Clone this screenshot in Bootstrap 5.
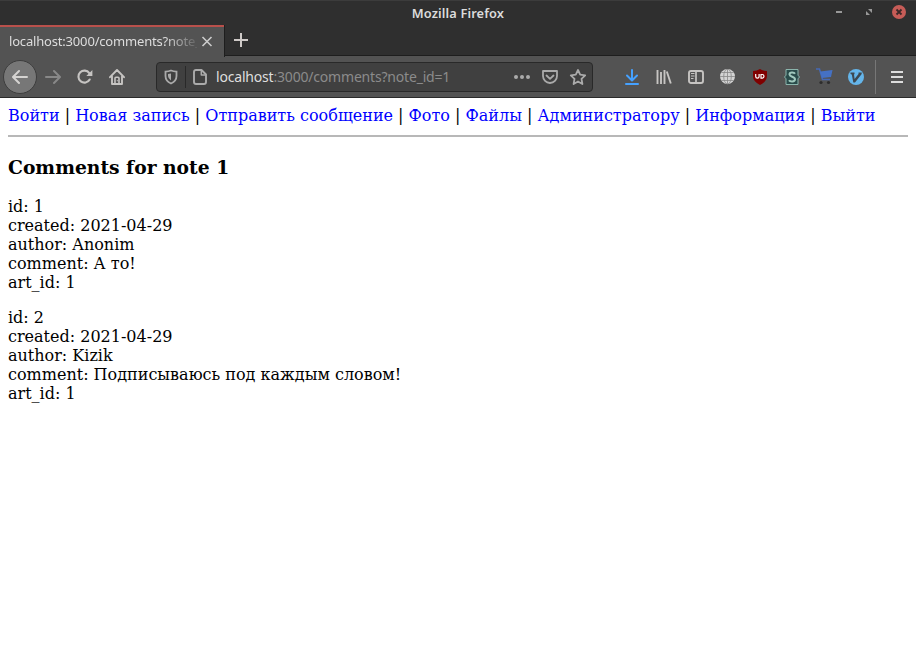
<!DOCTYPE html>
<html lang="ru">
<head>
<meta charset="utf-8">
<title>Mozilla Firefox</title>
<link rel="stylesheet" href="https://cdn.jsdelivr.net/npm/bootstrap@5.3.0/dist/css/bootstrap.min.css">
<style>
body{height:662px;overflow:hidden;background:#fff;color:#000}
.chrome{font-family:"Noto Sans","Open Sans",sans-serif;background:#2f2f2f;color:#ddd}
.chrome svg{display:block;flex:none}
.titlebar{height:25px;border-top:1px solid #3c3c3c;display:grid;grid-template-columns:1fr auto 1fr}
.wintitle{font-size:12.8px;font-weight:600;line-height:23px;padding-top:1px;letter-spacing:.13px;color:#dcdcdc}
.tabs{height:31px}
.tab{width:224px;height:32px;background:#535353;border-top:2px solid #b9504b;padding-left:9px;padding-right:9px;position:relative}
.tab-edge{width:1px;height:32px;background:#1e1e1e}
.tablabel{width:188px;overflow:hidden;white-space:nowrap;font-size:13px;letter-spacing:-.18px;line-height:28px;padding-bottom:2px;color:#ddd;-webkit-mask-image:linear-gradient(90deg,#000 156px,transparent 192px);mask-image:linear-gradient(90deg,#000 156px,transparent 192px)}
.tabrest{height:31px;border-bottom:1px solid #1e1e1e}
.toolbar{height:42px;background:#535353;border-bottom:1px solid #2a2a2a;color:#c6c4c2}
.tool{width:32px;height:40px;display:flex;align-items:center;justify-content:center;flex:none}
.backbtn{width:34px;height:34px;border-radius:50%;background:#777;border:1px solid #3d3d3d;margin-left:3px}
.urlbar{width:437px;height:30px;background:#404040;border:1px solid #292929;border-radius:4px;margin-left:23px;color:#aaa}
.shield{margin-left:7px}
.urldiv{width:1px;height:22px;background:#292929;margin-left:7px;margin-right:7px}
.address{font-size:14px;letter-spacing:-.19px;white-space:nowrap;color:#8b8b8b;margin-left:9px;width:292px}
.address b{font-weight:400;color:#dedede}
.sep{width:1px;height:34px;background:#777;margin-left:3px;margin-right:5px}
.tools-end{padding-right:3px}
.page{font-family:"DejaVu Serif",serif;font-size:16px;line-height:19px;padding:8px}
.page a{color:#00f;text-decoration:none}
.page hr{margin:10px 0 19px;border:0;height:2px;background:#b8b8b8;opacity:1}
.page h3{font-size:18.72px;line-height:22px;font-weight:700;margin:0 0 19px}
.page p{margin:0 0 16px}
</style>
<script src="https://cdn.jsdelivr.net/npm/bootstrap@5.3.0/dist/js/bootstrap.bundle.min.js"></script>
</head>
<body>
<header class="chrome">
  <div class="titlebar">
    <span></span><div class="wintitle">Mozilla Firefox</div>
    <div class="d-flex justify-content-end align-items-start">
      <svg width="84" height="24" viewBox="832 1 84 24"><path d="M836 11h6v2h-6z" fill="#999"/><path d="M868 9h4v4zM866 11v4h4z" fill="#999"/><circle cx="899" cy="12" r="7" fill="#c65c57"/><path d="m896.5 9.500 5 5m0-5-5 5" stroke="#3a2828" stroke-width="1.8"/></svg>
    </div>
  </div>
  <div class="tabs d-flex">
    <div class="tab d-flex align-items-center">
      <div class="tablabel">localhost:3000/comments?note_id=1</div>
      <svg class="ms-1" width="12" height="12" viewBox="0 0 12 12"><path d="m1.500 1 9 9m0-9-9 9" stroke="#ccc" stroke-width="1.600"/></svg>
    </div>
    <div class="tab-edge"></div>
    <div class="tabrest flex-grow-1 d-flex align-items-center">
      <svg class="ms-2" width="16" height="16" viewBox="0 0 16 16"><path d="M8 1v14M1 8h14" stroke="#cfcac8" stroke-width="2"/></svg>
    </div>
  </div>
  <div class="toolbar d-flex align-items-center">
    <div class="backbtn d-flex align-items-center justify-content-center"><svg width="16" height="16" viewBox="0 0 16 16" fill="none" stroke="#d5d3d1" stroke-width="2" stroke-linecap="round" stroke-linejoin="round"><path d="M15 8H1.500M7 2 1 8l6 6"/></svg></div>
    <div class="tool"><svg width="16" height="16" viewBox="0 0 16 16" fill="none" stroke="#888" stroke-width="2" stroke-linecap="round" stroke-linejoin="round"><path d="M1 8h13.500M9 2l6 6-6 6"/></svg></div>
    <div class="tool"><svg width="16" height="16" viewBox="0 0 16 16"><path d="M12.700 10.500A6 6 0 1 1 12.300 4.100" fill="none" stroke="currentColor" stroke-width="2.100" stroke-linecap="round"/><path d="M15.400 1v6H9.300z" fill="currentColor"/></svg></div>
    <div class="tool"><svg width="16" height="16" viewBox="0 0 16 16" fill="none" stroke="currentColor" stroke-width="1.900" stroke-linecap="round" stroke-linejoin="round"><path d="M1 8.200 8 1l7 7.200M3 7.500V15h10V7.500"/><path d="M6 14.500V9.300q0-1 1-1h2q1 0 1 1v5.200" stroke-width="1.600"/><path d="M8.300 11.500v.4" stroke-width="1"/></svg></div>
    <div class="urlbar d-flex align-items-center">
      <svg class="shield" width="14" height="16" viewBox="0 0 14 16"><path d="M7 1.500Q9.500 2.500 12.500 2.700V7q0 5-5.500 7.500Q1.500 12 1.500 7V2.700Q4.500 2.500 7 1.500z" fill="none" stroke="#aaa" stroke-width="1.800"/><path d="M7 4.500v7Q4 9.500 4 7V5z" fill="#aaa"/></svg>
      <div class="urldiv"></div>
      <svg width="14" height="16" viewBox="0 0 14 16" fill="none" stroke="#aaa" stroke-width="1.900" stroke-linejoin="round"><path d="M3 1h5.500L13 5.500V13q0 2-2 2H3q-2 0-2-2V3q0-2 2-2z"/><path d="M8.300 1v5H13" stroke-width="1.500"/></svg>
      <div class="address"><b>localhost</b>:3000/comments?note_id=1</div>
      <svg class="ms-1" width="76" height="18" viewBox="512 68 76 18" fill="none" stroke="#aaa" stroke-width="1.800" stroke-linejoin="round" stroke-linecap="round"><g fill="#aaa" stroke="none"><circle cx="516" cy="77" r="2"/><circle cx="522" cy="77" r="2"/><circle cx="528" cy="77" r="2"/></g><path d="M543 71h14v5a7 7 0 0 1-14 0zM546.500 75.500l3.500 3.300 3.500-3.300M578 70l2.200 4.700 5 .7-3.700 3.500.9 5.100-4.400-2.500-4.400 2.500.9-5.100-3.700-3.500 5-.7z"/></svg>
    </div>
    <div class="tools-end d-flex align-items-center ms-auto">
      <div class="tool"><svg width="16" height="16" viewBox="0 0 16 16" fill="none" stroke="#45a1ff" stroke-width="2" stroke-linejoin="round" stroke-linecap="round"><path d="M8 1v10M3 6.500l5 5 5-5"/><path d="M2 15h12"/></svg></div>
      <div class="tool"><svg width="16" height="16" viewBox="0 0 16 16"><path d="M1.500 1v14M5 3v12M8.500 1v14M10.800 2.500l4 12" fill="none" stroke="currentColor" stroke-width="1.900"/></svg></div>
      <div class="tool"><svg width="16" height="16" viewBox="0 0 16 16" fill="none" stroke="currentColor"><rect x="1" y="2" width="14" height="12" rx="2" stroke-width="1.900"/><path d="M8 2v12" stroke-width="1.700"/><path d="M3 4.500h3.500M3 7h3.500M3 9.500h2.500"/></svg></div>
      <div class="tool"><svg width="16" height="16" viewBox="0 0 16 16"><circle cx="7.500" cy="7.500" r="7.500" fill="#d4d4d4"/><g fill="none" stroke="#888" stroke-width=".8"><ellipse cx="7.500" cy="7.500" rx="3.800" ry="7.500"/><path d="M7.500 0v15M0 7.500h15M1.500 3.500h12M1.500 11.500h12"/></g></svg></div>
      <div class="tool"><svg width="16" height="16" viewBox="0 0 16 16"><path d="M8 0Q11 2 15 2v5q0 5.500-7 9Q1 12.500 1 7V2q4 0 7-2z" fill="#800000"/><path d="M3.700 5v2.500a1.700 1.700 0 0 0 3.400 0V5" fill="none" stroke="#fff" stroke-width="1.200"/><path d="M9 5.500h1.200a1.700 1.700 0 0 1 0 3.600H9z" fill="none" stroke="#fff" stroke-width="1.200"/></svg></div>
      <div class="tool"><svg width="16" height="16" viewBox="0 0 16 16"><path d="M2 .5h12v5.700L15.500 8 14 9.800v5.700H2V9.800L.5 8 2 6.200z" fill="#294b4a" stroke="#8bb5ad"/><path d="M11 4.800C10 3 5.500 3 5.500 5.500S11 7.500 11 10.300 6 13 5 11.200" fill="none" stroke="#a0c8bd" stroke-width="2"/></svg></div>
      <div class="tool"><svg width="17" height="17" viewBox="0 0 17 17"><path d="M0 1h3.500l3 10.500H14" fill="none" stroke="#4569b5" stroke-width="1.500"/><path d="M4 3.500 16.500 2 15 9l-9 1z" fill="#4571c4"/><circle cx="5" cy="14.500" r="1.600" fill="#2d2d2d"/><circle cx="12.500" cy="14.500" r="1.600" fill="#2d2d2d"/></svg></div>
      <div class="tool"><svg width="16" height="16" viewBox="0 0 16 16"><circle cx="8" cy="8" r="8" fill="#64b5ea"/><path d="M2.500 3.500h4V5l-.5.500.6 4.500L10.500 5V3.500h3.200V5L7 13.500H5.300L3.800 5.500 2.500 5z" fill="#3d4850"/></svg></div>
      <div class="sep"></div>
      <div class="tool"><svg width="12" height="12" viewBox="0 0 12 12"><path d="M0 1h12M0 6h12M0 11h12" stroke="#ddd" stroke-width="2"/></svg></div>
    </div>
  </div>
</header>
<main class="page">
  <nav><a href="#">Войти</a> | <a href="#">Новая запись</a> | <a href="#">Отправить сообщение</a> | <a href="#">Фото</a> | <a href="#">Файлы</a> | <a href="#">Администратору</a> | <a href="#">Информация</a> | <a href="#">Выйти</a></nav>
  <hr>
  <h3>Comments for note 1</h3>
  <p>id: 1<br>created: 2021-04-29<br>author: Anonim<br>comment: А то!<br>art_id: 1</p>
  <p>id: 2<br>created: 2021-04-29<br>author: Kizik<br>comment: Подписываюсь под каждым словом!<br>art_id: 1</p>
</main>
</body>
</html>
